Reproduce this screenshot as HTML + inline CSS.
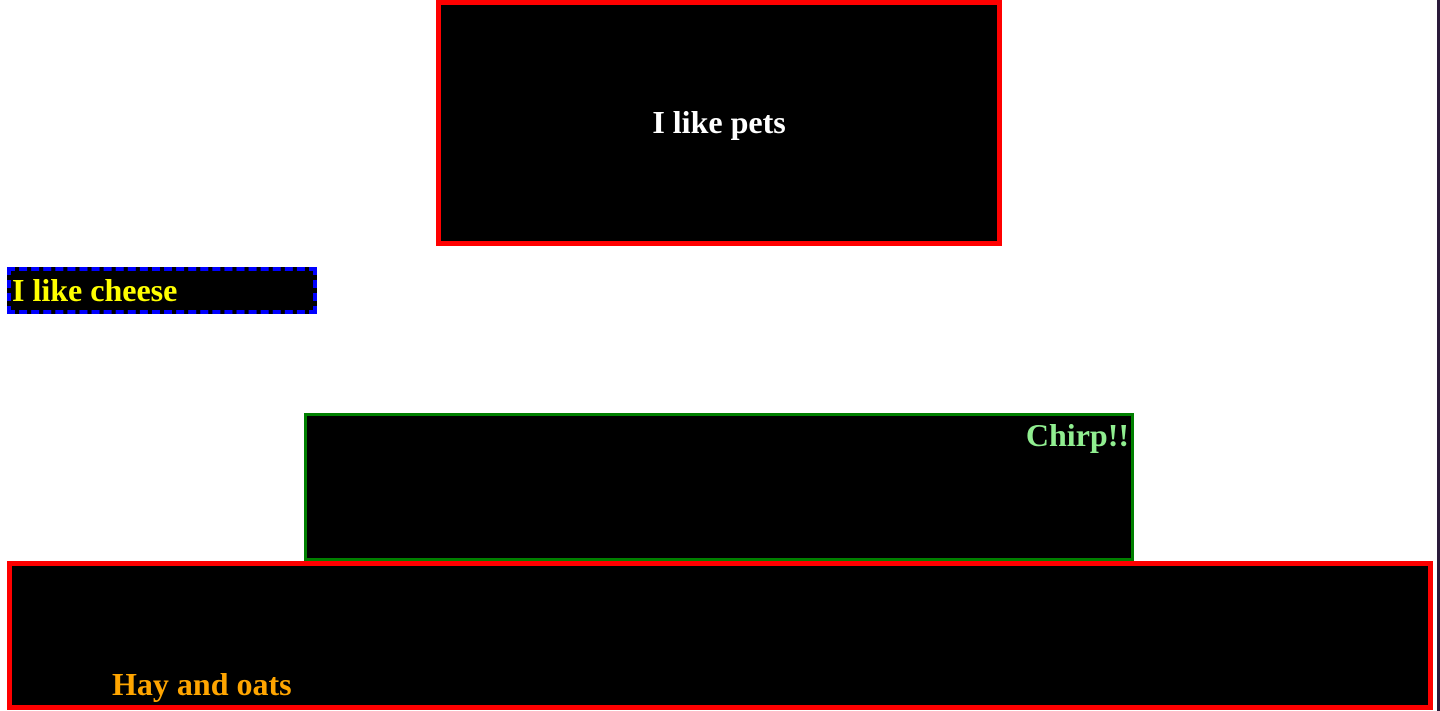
<!DOCTYPE html>
<html><head><style>
html,body{margin:0;padding:0;background:#fff;width:1440px;height:711px;overflow:hidden;position:relative;font-family:"Liberation Serif",serif;font-weight:bold;font-size:32px;}
div{position:absolute;box-sizing:border-box;background:#000;}
#pets{left:436px;top:0;width:566px;height:246px;border:5px solid red;color:#fff;text-align:center;line-height:234px;}
#cheese{left:7px;top:267px;width:310px;height:47px;border:4px dashed blue;color:yellow;line-height:39px;padding-left:1px;}
#chirp{left:304px;top:413px;width:830px;height:148px;border:3px solid green;color:lightgreen;text-align:right;line-height:39px;padding-right:2px;}
#hay{left:7px;top:561px;width:1426px;height:149px;border:5px solid red;color:orange;}
#hay span{position:absolute;left:100px;top:100px;line-height:36px;}
#edge{left:1437px;top:0;width:3px;height:711px;background:#2a1a3a;}
</style></head><body>
<div id="pets">I like pets</div>
<div id="cheese">I like cheese</div>
<div id="chirp">Chirp!!</div>
<div id="hay"><span>Hay and oats</span></div>
<div id="edge"></div>
</body></html>
